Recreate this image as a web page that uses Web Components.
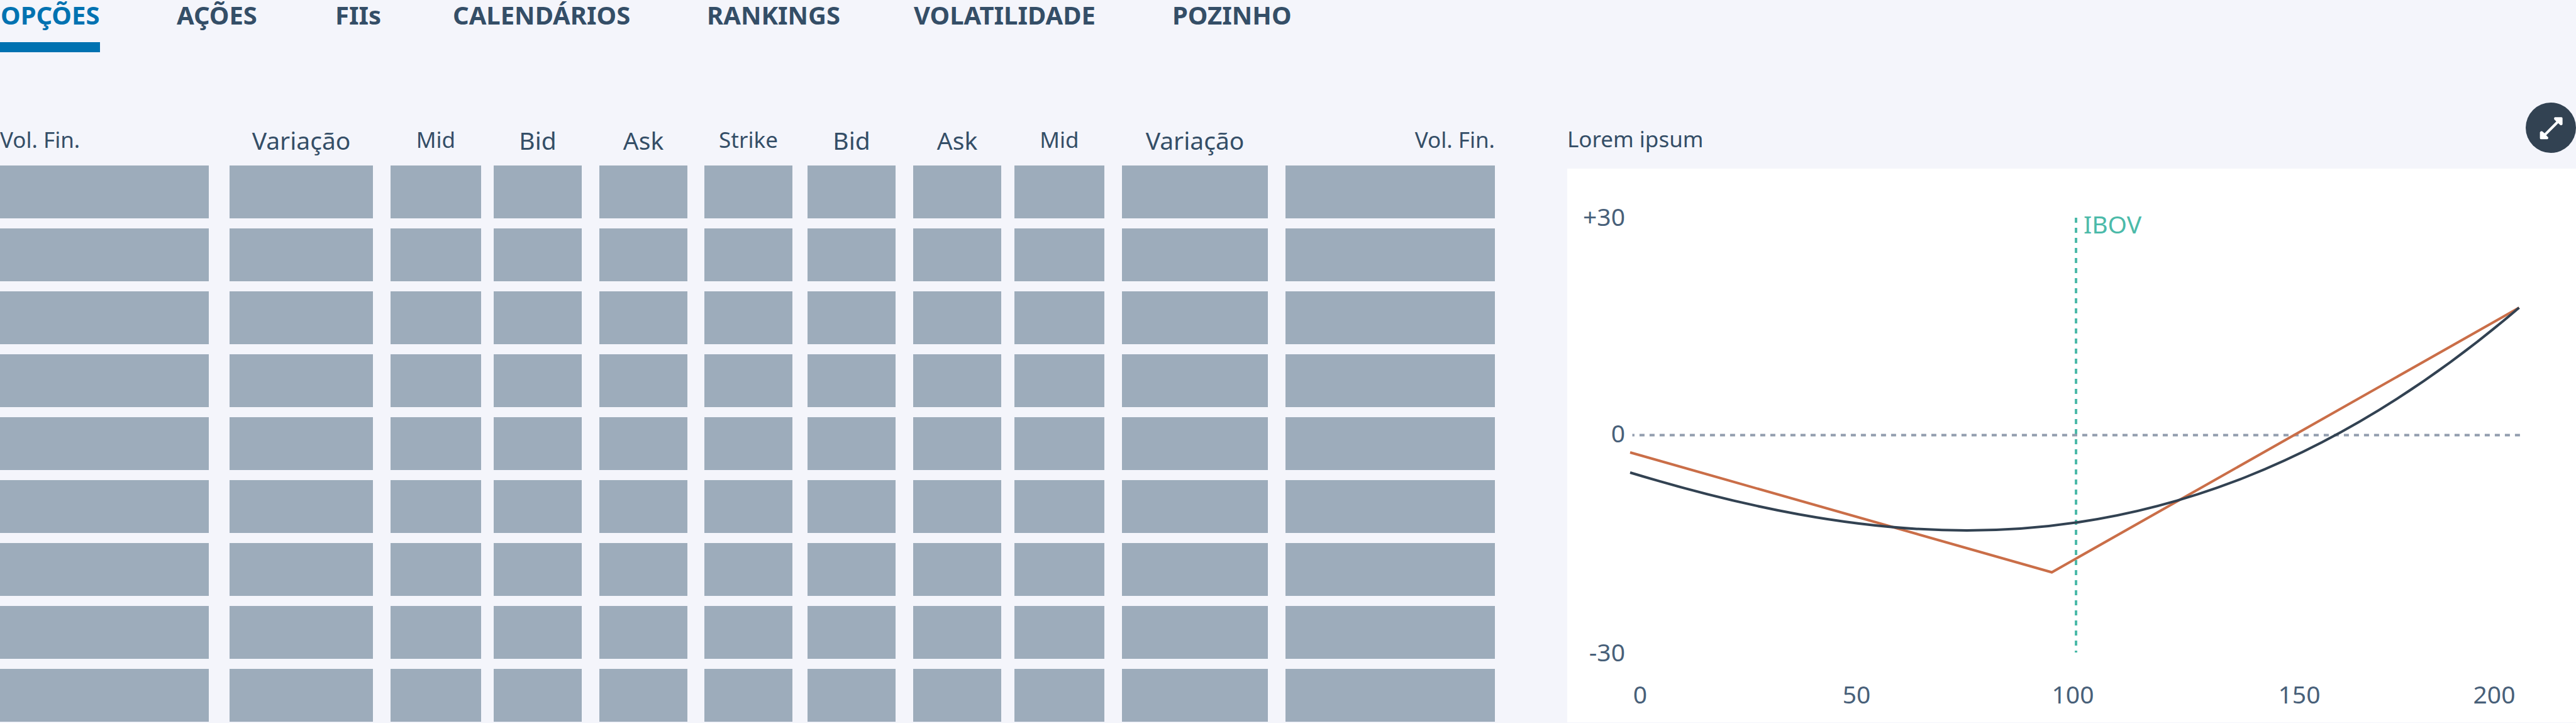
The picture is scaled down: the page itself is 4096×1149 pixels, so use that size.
<!DOCTYPE html>
<html lang="pt-BR">
<head>
<meta charset="utf-8">
<title>Opções</title>
<style>
  body { margin: 0; background: #f4f5fb; color: #344e67; font-family: "Noto Sans", "Open Sans", sans-serif; }
</style>
</head>
<body>
<options-page></options-page>
<script>
class NavTab extends HTMLElement {
  connectedCallback() {
    this.attachShadow({ mode: 'open' }).innerHTML = `
      <style>
        :host { display: flex; }
        a { display: block; color: inherit; text-decoration: none; font-weight: 700; font-size: 40px; line-height: 48px; padding: 0 1px 19px; border-bottom: 16px solid transparent; white-space: nowrap; }
        :host([active]) a { color: #0072b1; border-color: #0072b1; }
      </style>
      <a href="#"><slot></slot></a>`;
    if (this.hasAttribute('active')) this.shadowRoot.querySelector('a').setAttribute('aria-current', 'page');
  }
}

class NavBar extends HTMLElement {
  connectedCallback() {
    this.attachShadow({ mode: 'open' }).innerHTML = `
      <style>
        :host { display: block; }
        nav { display: grid; grid-template-columns: 280px 252px 187px 404px 329px 411px auto; justify-content: start; }
      </style>
      <nav><slot></slot></nav>`;
  }
}

class OptionsGrid extends HTMLElement {
  connectedCallback() {
    // [label, size, cell width, gap after]
    const columns = [
      ['Vol. Fin.', 'small start', 332, 33], ['Variação', '', 228, 28], ['Mid', 'small', 144, 20],
      ['Bid', '', 140, 28], ['Ask', '', 140, 27], ['Strike', 'small', 140, 24], ['Bid', '', 140, 28],
      ['Ask', '', 140, 21], ['Mid', 'small', 143, 28], ['Variação', '', 232, 28], ['Vol. Fin.', 'small end', 333, 0]
    ];
    const row = '<tr>' + columns.map(c => `<td style="padding-right:${c[3]}px"><div></div></td>`).join('') + '</tr>';
    this.attachShadow({ mode: 'open' }).innerHTML = `
      <style>
        :host { display: block; padding-top: 34px; }
        table { width: 100%; table-layout: fixed; border-collapse: collapse; }
        th, td { padding: 0; }
        th { height: 66px; vertical-align: top; font-weight: 400; font-size: 39px; line-height: 52px; text-align: center; white-space: nowrap; }
        .small { font-size: 35px; line-height: 50px; }
        .start { text-align: left; }
        .end { text-align: right; }
        td { padding-bottom: 16px; }
        tr:last-child td { padding-bottom: 0; }
        div { height: 84px; background: #9dacbb; }
      </style>
      <table>
        <colgroup>${columns.map(c => `<col style="width:${c[2] + c[3]}px">`).join('')}</colgroup>
        <thead><tr>${columns.map(c => `<th scope="col" class="${c[1]}" style="padding-right:${c[3]}px">${c[0]}</th>`).join('')}</tr></thead>
        <tbody>${row.repeat(9)}</tbody>
      </table>`;
  }
}

class ExpandButton extends HTMLElement {
  connectedCallback() {
    this.attachShadow({ mode: 'open' }).innerHTML = `
      <style>
        :host { display: block; }
        button { display: block; width: 80px; height: 80px; padding: 0; border: 0; border-radius: 50%; background: #324252; cursor: pointer; }
        svg { display: block; width: 100%; height: 100%; }
      </style>
      <button type="button" aria-label="Expandir">
        <svg viewBox="0 0 258 258" fill="#fff"><path d="M157 97L147 87Q143 80 149 75H183Q189 75 189 81V111Q186 118 178 116L167 106L105 168L115 177Q118 185 111 188H79Q73 188 73 182V152Q76 145 84 147L97 157Z"/></svg>
      </button>`;
  }
}

class PayoffChart extends HTMLElement {
  connectedCallback() {
    this.attachShadow({ mode: 'open' }).innerHTML = `
      <style>
        :host { display: block; background: #fff; }
        svg { display: block; width: 100%; height: auto; }
        text { font-size: 39px; fill: #486079; }
        .y { text-anchor: end; }
        .x { text-anchor: middle; }
        .ibov { fill: #4cbaa9; }
      </style>
      <svg viewBox="0 0 1604 880" fill="none" stroke-width="4">
        <g stroke="none">
          <text class="y" x="92" y="91">+30</text>
          <text class="y" x="92" y="435">0</text>
          <text class="y" x="92" y="783">-30</text>
          <text class="x" x="116" y="850">0</text>
          <text class="x" x="460" y="850">50</text>
          <text class="x" x="804" y="850">100</text>
          <text class="x" x="1164" y="850">150</text>
          <text class="x" x="1474" y="850">200</text>
          <text class="ibov" x="821" y="103">IBOV</text>
        </g>
        <path d="M809 78V769" stroke="#4cbaa9" stroke-dasharray="8 8"/>
        <path d="M103.5 423.5H1515" stroke="#929dae" stroke-dasharray="8 8" stroke-dashoffset="4.6"/>
        <path d="M100 451L770.5 641.5L1513.5 221" stroke="#ca6e48"/>
        <path d="M100 483C278 537 457 575 635.5 575C935 575 1225 467 1513.5 221" stroke="#324252"/>
      </svg>`;
  }
}

class ChartPanel extends HTMLElement {
  connectedCallback() {
    this.attachShadow({ mode: 'open' }).innerHTML = `
      <style>
        :host { display: block; }
        header { display: flex; justify-content: space-between; align-items: flex-end; margin-bottom: 25px; }
        h2 { margin: 0; font-weight: 400; font-size: 35px; line-height: 44px; }
      </style>
      <header><h2><slot></slot></h2><expand-button></expand-button></header>
      <payoff-chart></payoff-chart>`;
  }
}

class OptionsPage extends HTMLElement {
  connectedCallback() {
    this.attachShadow({ mode: 'open' }).innerHTML = `
      <style>
        :host { display: block; }
        main { display: grid; grid-template-columns: 2377fr 1604fr; column-gap: 115px; align-items: start; margin-top: 80px; }
      </style>
      <nav-bar>
        <nav-tab active>OPÇÕES</nav-tab><nav-tab>AÇÕES</nav-tab><nav-tab>FIIs</nav-tab><nav-tab>CALENDÁRIOS</nav-tab><nav-tab>RANKINGS</nav-tab><nav-tab>VOLATILIDADE</nav-tab><nav-tab>POZINHO</nav-tab>
      </nav-bar>
      <main>
        <options-grid></options-grid>
        <chart-panel>Lorem ipsum</chart-panel>
      </main>`;
  }
}

customElements.define('nav-tab', NavTab);
customElements.define('nav-bar', NavBar);
customElements.define('options-grid', OptionsGrid);
customElements.define('expand-button', ExpandButton);
customElements.define('payoff-chart', PayoffChart);
customElements.define('chart-panel', ChartPanel);
customElements.define('options-page', OptionsPage);
</script>
</body>
</html>
